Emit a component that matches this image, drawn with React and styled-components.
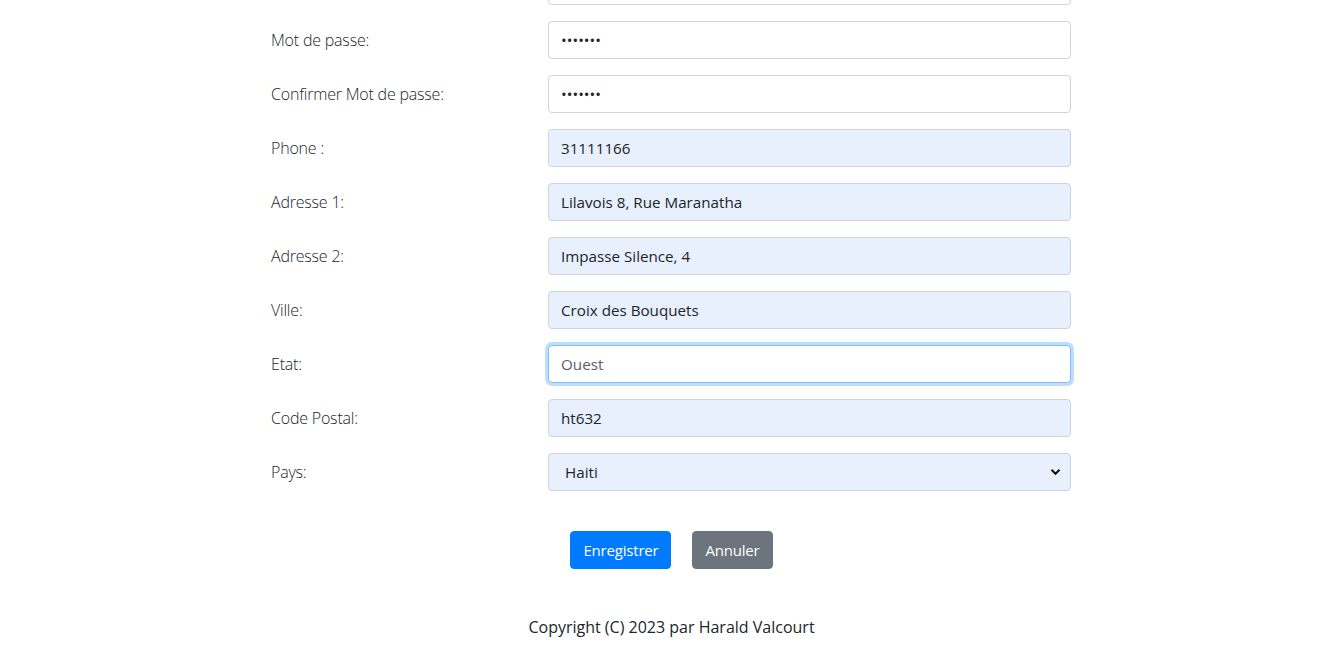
import React from 'react';
import styled, { createGlobalStyle } from 'styled-components';

const GlobalStyle = createGlobalStyle`
  html, body { margin: 0; padding: 0; background: #fff; }
  body {
    font-family: "Open Sans", "Noto Sans", "Liberation Sans", sans-serif;
    color: #212529;
    overflow: hidden;
  }
`;

const Page = styled.div`
  width: 801px;
  margin: -33px auto 0;
`;

const Row = styled.div`
  display: grid;
  grid-template-columns: 277px 523px;
  align-items: center;
  margin-bottom: 16px;
`;

const Label = styled.label`
  font-size: 16px;
  font-weight: 300;
  color: #212529;
  letter-spacing: -0.2px;
`;

const Input = styled.input`
  box-sizing: border-box;
  width: 100%;
  height: 38px;
  padding: 6px 12px;
  font-family: "Open Sans", "Noto Sans", sans-serif;
  font-size: 15.2px;
  color: ${p => (p.$focus ? '#5a6168' : '#212529')};
  background: ${p => (p.$filled ? '#e8f0fe' : '#fff')};
  border: 1px solid ${p => (p.$focus ? '#80bdff' : '#ced4da')};
  border-radius: 4px;
  box-shadow: ${p => (p.$focus ? '0 0 0 3px rgba(0,123,255,.25)' : 'none')};
  outline: none;
  caret-color: #212529;
`;

const SelectWrap = styled.div`
  position: relative;
`;

const Select = styled.select`
  box-sizing: border-box;
  width: 100%;
  height: 38px;
  padding: 6px 12px 6px 16px;
  font-family: "Open Sans", "Noto Sans", sans-serif;
  font-size: 15.2px;
  color: #212529;
  background: #e8f0fe;
  border: 1px solid #ced4da;
  border-radius: 4px;
  appearance: none;
  outline: none;
`;

const Chevron = styled.svg`
  position: absolute;
  right: 10px;
  top: 15px;
  pointer-events: none;
`;

const Actions = styled.div`
  display: flex;
  justify-content: center;
  gap: 21px;
  margin-top: 40px;
`;

const Button = styled.button`
  height: 38px;
  padding: 0 12px;
  font-family: "Open Sans", "Noto Sans", sans-serif;
  font-size: 15px;
  letter-spacing: -0.2px;
  color: #fff;
  background: ${p => (p.$variant === 'secondary' ? '#6c757d' : '#007bff')};
  border: 1px solid ${p => (p.$variant === 'secondary' ? '#6c757d' : '#007bff')};
  border-radius: 4px;
  cursor: pointer;
`;

const Footer = styled.footer`
  text-align: center;
  margin-top: 46px;
  font-size: 16px;
  font-weight: 500;
  line-height: 24px;
  color: #212529;
`;

const fields = [
  { label: '', value: '', type: 'text' },
  { label: 'Mot de passe:', value: 'abcdefg', type: 'password' },
  { label: 'Confirmer Mot de passe:', value: 'abcdefg', type: 'password' },
  { label: 'Phone :', value: '31111166', filled: true },
  { label: 'Adresse 1:', value: 'Lilavois 8, Rue Maranatha', filled: true },
  { label: 'Adresse 2:', value: 'Impasse Silence, 4', filled: true },
  { label: 'Ville:', value: 'Croix des Bouquets', filled: true },
  { label: 'Etat:', value: 'Ouest', focus: true },
  { label: 'Code Postal:', value: 'ht632', filled: true },
];

export default function App() {
  return (
    <>
      <GlobalStyle />
      <Page>
        {fields.map((f, i) => (
          <Row key={i}>
            <Label>{f.label}</Label>
            <Input
              type={f.type || 'text'}
              defaultValue={f.value}
              $filled={f.filled}
              $focus={f.focus}
              autoFocus={f.focus}
            />
          </Row>
        ))}
        <Row>
          <Label>Pays:</Label>
          <SelectWrap>
            <Select defaultValue="Haiti">
              <option>Haiti</option>
              <option>France</option>
              <option>Canada</option>
            </Select>
            <Chevron width="11" height="8" viewBox="0 0 11 8">
              <path d="M1.5 1.8 L5.5 5.8 L9.5 1.8" fill="none" stroke="#111" strokeWidth="2" />
            </Chevron>
          </SelectWrap>
        </Row>
        <Actions>
          <Button>Enregistrer</Button>
          <Button $variant="secondary">Annuler</Button>
        </Actions>
        <Footer>Copyright (C) 2023 par Harald Valcourt</Footer>
      </Page>
    </>
  );
}
